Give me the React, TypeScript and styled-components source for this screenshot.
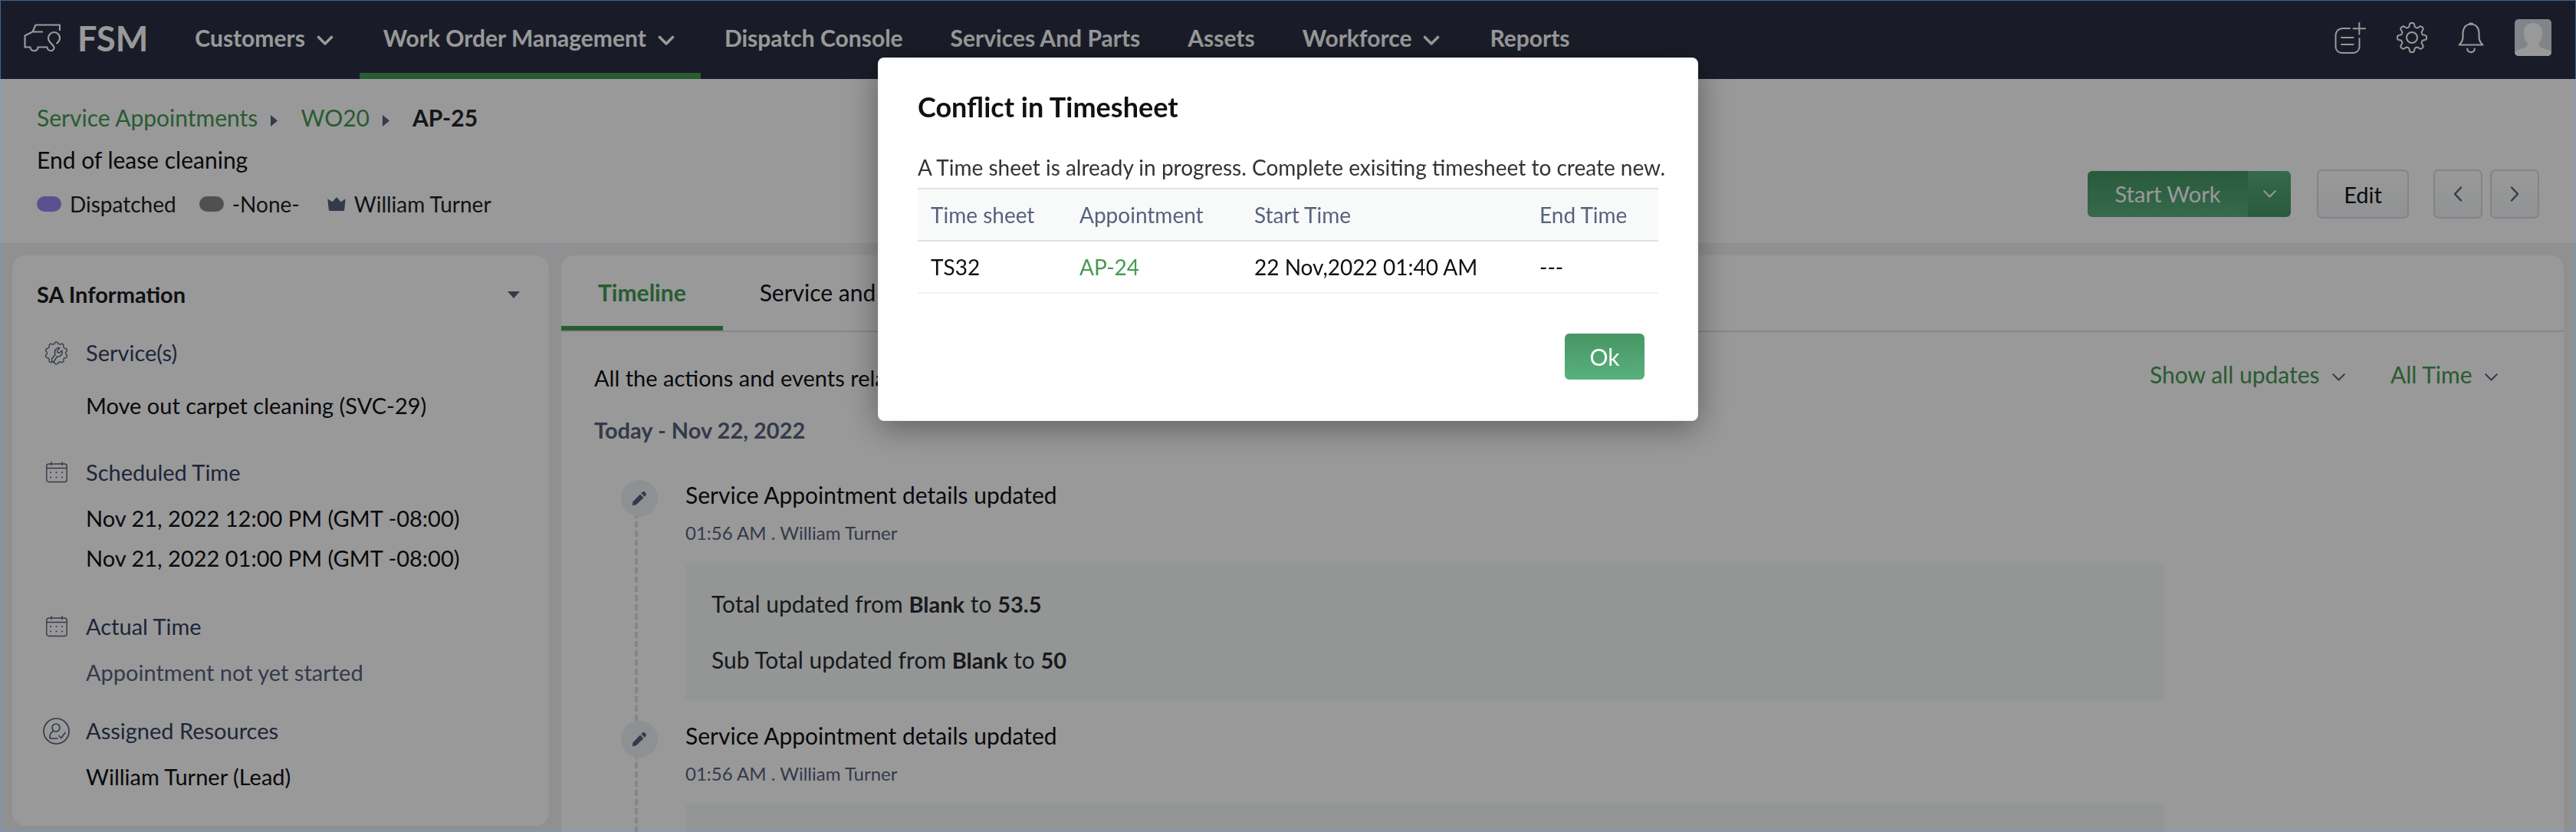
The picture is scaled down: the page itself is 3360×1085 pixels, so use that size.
import React from "react";
import styled, { createGlobalStyle, css } from "styled-components";

const color = {
  nav: "#2b3043",
  green: "#449952",
  ink: "#0f0f14",
  slate: "#57627d",
  navy: "#343f63",
  line: "#dbe3e8",
  canvas: "#f1f1f4",
};

const GlobalStyle = createGlobalStyle`
  *, *::before, *::after { box-sizing: border-box; }
  body { margin: 0; background: ${color.canvas}; }
  body, button, select, table { font-family: Lato, "Liberation Sans", sans-serif; }
  h1, h2, h3, p, ul, ol, dl, dd { margin: 0; padding: 0; font-weight: 400; }
  ul, ol { list-style: none; }
  button, select { border: 0; padding: 0; margin: 0; background: none; color: inherit; cursor: pointer; }
  a { color: inherit; text-decoration: none; }
  svg { display: block; flex: none; }
`;

/* ---------- icons ---------- */

const lobes = (count: number, center: number, radius: number, depth: number) => {
  const points: string[] = [];
  for (let i = 0; i < 240; i++) {
    const angle = (i / 240) * Math.PI * 2;
    const wave = Math.tanh(2 * Math.cos(count * angle));
    const r = radius + depth * wave;
    points.push(`${(center + r * Math.sin(angle)).toFixed(2)} ${(center - r * Math.cos(angle)).toFixed(2)}`);
  }
  return `M${points.join("L")}Z`;
};

const Stroke = styled.svg.attrs({ fill: "none", stroke: "currentColor", strokeLinecap: "round", strokeLinejoin: "round" })``;

const VanIcon = () => (
  <Stroke width="48" height="37" viewBox="0 0 48 37" strokeWidth="2.2">
    <path strokeLinecap="butt" d="M47 9V1.5H15.5L11.5 10.5L1.5 15.5V30.5H8.5C9 36.8 18 36.8 18.5 30.5H30.5C31 36.8 40 36.8 39.5 30.5C39 27 32 25 32 18.5A7.5 7.5 0 1 1 47 18.5C47 21.5 45 24 42.5 26M11.5 10.5H25" />
  </Stroke>
);

const NoteAddIcon = () => (
  <Stroke width="41" height="41" viewBox="0 0 41 41" strokeWidth="2">
    <path d="M20 8H10A9 9 0 0 0 1.5 17V32A8 8 0 0 0 9.5 40H24.5A8 8 0 0 0 32.5 32V21M9 20H24.5M9 29H24.5M24.5 8.3H40M32.3 .8V15.8" />
  </Stroke>
);

const GearIcon = () => (
  <Stroke width="40" height="40" viewBox="0 0 40 40" strokeWidth="2">
    <path d={lobes(8, 20, 16.6, 2.6)} />
    <circle cx="20" cy="20" r="7" />
  </Stroke>
);

const BellIcon = () => (
  <Stroke width="34" height="41" viewBox="0 0 34 41" strokeWidth="2.2">
    <path d="M17 2.5C10 2.5 6.5 8 6.5 14V19C6.5 24 4.5 27 1.5 29.5H32.5C29.5 27 27.5 24 27.5 19V14C27.5 8 24 2.5 17 2.5Z" />
    <path d="M15.5 2H18.5" strokeWidth="3" />
    <path d="M12.2 34.5A4.8 4.6 0 0 0 21.8 34.5" />
  </Stroke>
);

const ServiceIcon = () => (
  <Stroke width="31" height="31" viewBox="0 0 31 31" strokeWidth="1.4">
    <path d={lobes(10, 15.5, 13.3, 1.1)} />
    <path d="M9.5 26.5L9.5 23L14 17.5C12 12.5 15.5 7.5 20 8.5L16.8 12L17 14.5L19.5 15.2L22.8 12C24.5 16.5 20.5 21 16.5 20L11.5 27.5" />
  </Stroke>
);

const CalendarIcon = () => (
  <Stroke width="28" height="28" viewBox="0 0 28 28" strokeWidth="1.4">
    <rect x=".8" y="3" width="26.4" height="23.5" rx="3" />
    <path d="M1 8.5H27M7 .5V4.5M21 .5V4.5" />
    <path strokeWidth="2.2" d="M6 14h.01M13.5 14h.01M21 14h.01M6 20.5h.01M13.5 20.5h.01M21 20.5h.01" />
  </Stroke>
);

const ResourceIcon = () => (
  <Stroke width="35" height="35" viewBox="0 0 35 35" strokeWidth="1.7">
    <circle cx="17.5" cy="17.5" r="16.5" />
    <circle cx="17" cy="13" r="5" />
    <path d="M13.5 17.5C10.5 19 9 21 9 25C9 26.5 10 27 11 27H19M21 23.5L24 26.5L29 19.5" />
  </Stroke>
);

const CrownIcon = () => (
  <svg width="24" height="18" viewBox="0 0 24 18" fill={color.slate}>
    <path d="M.3 2.3L6.5 6.2L12 0L17.5 6.2L23.7 2.3L22.2 16.5Q22 18 20.5 18H3.5Q2 18 1.8 16.5Z" />
  </svg>
);

const PencilIcon = () => (
  <svg width="20" height="20" viewBox="0 0 20 20" fill={color.slate}>
    <path d="M.8 19.2L1.5 14.2L11 4.5L15.5 9L5.8 18.2Z" />
    <path d="M12.3 3.3L14 1.5Q15.8 .2 17.8 2.2Q19.8 4.2 18.5 6L16.7 7.7Z" />
  </svg>
);

const Chevron = ({ large = false }: { large?: boolean }) => (
  <Stroke width={large ? 22 : 19} height={large ? 14 : 12} viewBox="0 0 22 14" strokeWidth={large ? 3.6 : 2.4}>
    <path d="M2.5 2.5L11 11L19.5 2.5" />
  </Stroke>
);

const AngleIcon = ({ flip = false }: { flip?: boolean }) => (
  <Stroke width="12" height="20" viewBox="0 0 12 20" strokeWidth="2.4">
    <path d={flip ? "M2 1.5L10 10L2 18.5" : "M10 1.5L2 10L10 18.5"} />
  </Stroke>
);

const CaretDown = () => (
  <svg width="16" height="9" viewBox="0 0 16 9" fill={color.slate}>
    <path d="M0 0H16L8 9Z" />
  </svg>
);

const CaretRight = () => (
  <svg width="9" height="15" viewBox="0 0 9 15" fill={color.slate}>
    <path d="M0 0L9 7.5L0 15Z" />
  </svg>
);

const AvatarImage = () => (
  <svg width="48" height="48" viewBox="0 0 48 48">
    <rect width="48" height="48" fill="#d7dce3" />
    <path fill="#fff" d="M24 5C16 5 12 10 12 17C12 23 13.5 27 16.5 31C17 34.5 16 36 12 37.5C6 39.5 1.5 40 0 44V48H48V44C46.5 40 42 39.5 36 37.5C32 36 31 34.5 31.5 31C34.5 27 36 23 36 17C36 10 32 5 24 5Z" />
  </svg>
);

/* ---------- shell ---------- */

const Page = styled.div`
  display: flex;
  flex-direction: column;
  height: 100vh;
  overflow: hidden;
  color: ${color.ink};
`;

const TopBar = styled.header`
  display: flex;
  align-items: stretch;
  flex: none;
  height: 103px;
  padding: 0 32px 0 31px;
  background: ${color.nav};
  color: #fff;
`;

const Brand = styled.a`
  display: flex;
  align-items: center;
  gap: 22px;
  padding-right: 30px;
  padding-bottom: 4px;
  font-size: 45px;
  font-weight: 700;
`;

const Nav = styled.nav`
  display: flex;
  flex: 1;
`;

const navItem = css<{ $active?: boolean }>`
  display: flex;
  align-items: center;
  gap: 15px;
  padding: 0 31px 5px;
  font-size: 30px;
  font-weight: 700;
  white-space: nowrap;
  box-shadow: ${(p) => (p.$active ? `inset 0 -8px ${color.green}` : "none")};
`;

const NavLink = styled.a<{ $active?: boolean }>`
  ${navItem}
`;

const NavMenu = styled.button<{ $active?: boolean }>`
  ${navItem}
  padding-right: 34px;
  svg { margin-top: 8px; }
`;

const Tools = styled.div`
  display: flex;
  align-items: center;
  gap: 40px;
  padding-bottom: 5px;
`;

const ToolButton = styled.button`
  display: grid;
  place-items: center;
`;

const Avatar = styled(ToolButton)`
  border-radius: 5px;
  overflow: hidden;
`;

/* ---------- record header ---------- */

const RecordHeader = styled.section`
  display: flex;
  justify-content: space-between;
  align-items: flex-end;
  flex: none;
  padding: 30px 48px 32px;
  background: #fff;
`;

const RecordInfo = styled.div`
  display: grid;
  gap: 16px;
  line-height: 40px;
`;

const Crumbs = styled.ol`
  display: flex;
  font-size: 30px;
`;

const Crumb = styled.li`
  display: flex;
  align-items: center;
  color: ${color.green};
  svg { margin: 8px 30px 0 17px; }
  &[aria-current] { color: #24242e; font-weight: 700; }
`;

const Subject = styled.p`
  font-size: 30px;
  line-height: 38px;
`;

const StatusRow = styled.ul`
  display: flex;
  gap: 30px;
  padding-top: 4px;
  font-size: 28px;
  color: #1d1d24;
  line-height: 38px;
`;

const Status = styled.li<{ $indent?: boolean }>`
  display: flex;
  align-items: center;
  gap: 11px;
  padding-left: ${(p) => (p.$indent ? "6px" : "0")};
`;

const Pill = styled.span<{ $tone: string }>`
  width: 32px;
  height: 20px;
  border-radius: 10px;
  background: ${(p) => p.$tone};
`;

const Actions = styled.div`
  display: flex;
  align-items: center;
`;

const primaryFill = "linear-gradient(#479664, #58b17d)";

const SplitButton = styled.div`
  display: flex;
  height: 60px;
  margin-right: 34px;
  border-radius: 6px;
  overflow: hidden;
  color: #fff;
`;

const StartButton = styled.button`
  width: 209px;
  padding-bottom: 2px;
  font-size: 29px;
  background: ${primaryFill};
`;

const StartMenu = styled.button`
  display: grid;
  place-items: center;
  width: 56px;
  background: linear-gradient(#58b17d, #479664);
`;

const OutlineButton = styled.button<{ $square?: boolean }>`
  display: grid;
  place-items: center;
  width: ${(p) => (p.$square ? "64px" : "120px")};
  height: 64px;
  border: 2px solid #d5dde1;
  border-radius: 7px;
  background: linear-gradient(#fff, #f2f4f7);
  color: ${(p) => (p.$square ? color.slate : color.ink)};
  font-size: 29px;
`;

const Pager = styled.div`
  display: flex;
  gap: 10px;
  margin-left: 32px;
`;

/* ---------- panels ---------- */

const Content = styled.main`
  display: grid;
  grid-template-columns: 700px minmax(0, 1fr);
  align-items: start;
  gap: 16px;
  padding: 16px;
  background: ${color.canvas};
`;

const Panel = styled.section`
  border-radius: 18px;
  background: #fff;
  overflow: hidden;
`;

const InfoPanel = styled(Panel)`
  display: grid;
  gap: 36px;
  padding: 31px 38px 44px 32px;
  line-height: 40px;
`;

const InfoTitle = styled.h2`
  display: flex;
  align-items: center;
  justify-content: space-between;
  font-size: 29px;
  font-weight: 700;
  color: #1b1b22;
`;

const InfoGroup = styled.div`
  display: grid;
  grid-template-columns: 64px 1fr;
  row-gap: 20px;
`;

const InfoIcon = styled.span`
  display: grid;
  place-items: center;
  width: 35px;
  height: 40px;
  margin-left: 8px;
  color: ${color.slate};
`;

const InfoLabel = styled.h3`
  font-size: 29px;
  color: ${color.navy};
`;

const InfoValues = styled.div<{ $kind?: "service" | "time" | "empty" }>`
  grid-column: 2;
  display: grid;
  gap: 12px;
  padding: ${(p) => (p.$kind === "service" ? "9px 0 11px" : p.$kind === "time" ? "0 0 13px" : "0")};
  font-size: 29px;
  color: ${(p) => (p.$kind === "empty" ? color.slate : color.ink)};
`;

const Tabs = styled.div`
  display: flex;
  border-bottom: 2px solid ${color.line};
`;

const Tab = styled.button<{ $active?: boolean }>`
  height: 98px;
  padding: 0 48px 2px;
  font-size: 30px;
  font-weight: ${(p) => (p.$active ? 700 : 400)};
  color: ${(p) => (p.$active ? color.green : color.ink)};
  box-shadow: ${(p) => (p.$active ? `inset 0 -6px ${color.green}` : "none")};
`;

const TimelineBody = styled.div`
  padding: 40px 40px 40px 43px;
`;

const IntroRow = styled.div`
  display: flex;
  justify-content: space-between;
  align-items: flex-start;
`;

const Intro = styled.p`
  font-size: 29px;
  line-height: 40px;
`;

const Filters = styled.div`
  display: flex;
  gap: 58px;
  margin-right: 45px;
`;

const Filter = styled.label`
  display: flex;
  align-items: center;
  gap: 14px;
  height: 30px;
  color: ${color.slate};
  svg { margin-top: 8px; }
`;

const FilterSelect = styled.select`
  appearance: none;
  font-size: 30px;
  line-height: 36px;
  color: ${color.green};
`;

const DayHeading = styled.h3`
  margin: 28px 0 45px;
  font-size: 29px;
  font-weight: 700;
  line-height: 40px;
  color: ${color.slate};
`;

const Events = styled.ol`
  margin-left: 35px;
`;

const Event = styled.li`
  display: grid;
  grid-template-columns: 48px minmax(0, 1fr);
  column-gap: 36px;
`;

const Rail = styled.div`
  display: flex;
  flex-direction: column;
`;

const Marker = styled.span`
  display: grid;
  place-items: center;
  width: 48px;
  height: 48px;
  border-radius: 50%;
  background: #eef0f4;
`;

const Dashes = styled.span`
  flex: 1;
  width: 4px;
  margin-left: 18px;
  background: repeating-linear-gradient(#d8e1e5 0 2px, transparent 2px 6px, #d8e1e5 6px 12px);
`;

const EventBody = styled.div`
  padding-bottom: 27px;
`;

const EventTitle = styled.h4`
  margin: 0;
  font-size: 30px;
  font-weight: 400;
  line-height: 38px;
`;

const EventMeta = styled.p`
  margin: 16px 0 24px;
  font-size: 24px;
  line-height: 30px;
  color: ${color.slate};
`;

const Changes = styled.ul`
  display: grid;
  gap: 33px;
  width: 80%;
  padding: 33px 34px;
  background: #f7fbf9;
  font-size: 30px;
  line-height: 40px;
  color: #2a2b33;
  b { font-size: 29px; line-height: 1; }
`;

/* ---------- dialog ---------- */

const Overlay = styled.div`
  position: fixed;
  inset: 0;
  display: flex;
  justify-content: center;
  align-items: flex-start;
  padding-top: 74px;
  border: 1px solid rgba(104, 157, 231, 0.54);
  background: rgba(0, 0, 0, 0.4);
`;

const Dialog = styled.div`
  width: 1070px;
  padding: 38px 50px 52px;
  border: 2px solid #f6f6f6;
  border-radius: 8px;
  background: #fff;
  box-shadow: 0 8px 44px rgba(0, 0, 0, 0.4);
`;

const DialogTitle = styled.h2`
  font-size: 36px;
  font-weight: 700;
  line-height: 48px;
  color: #111;
`;

const DialogText = styled.p`
  margin: 35px 0 7px;
  font-size: 28px;
  line-height: 40px;
  white-space: nowrap;
  color: #333;
`;

const SheetTable = styled.table`
  width: 100%;
  table-layout: fixed;
  border-collapse: separate;
  border-spacing: 0;
  text-align: left;
  font-size: 28px;
`;

const Col = styled.col<{ $width?: number }>`
  width: ${(p) => (p.$width ? `${p.$width}px` : "auto")};
`;

const HeadCell = styled.th`
  height: 70px;
  padding: 0 0 0 17px;
  border: solid ${color.line};
  border-width: 2px 0;
  background: #f8fafa;
  color: ${color.slate};
  font-weight: 400;
`;

const Cell = styled.td`
  height: 68px;
  padding: 0 0 0 17px;
  border-bottom: 2px solid #f0f4f8;
  color: ${color.ink};
`;

const GreenLink = styled.a`
  color: ${color.green};
`;

const DialogActions = styled.div`
  display: flex;
  justify-content: flex-end;
  margin: 52px 18px 0 0;
`;

const OkButton = styled.button`
  width: 104px;
  height: 60px;
  border-radius: 6px;
  background: ${primaryFill};
  color: #fff;
  font-size: 30px;
`;

/* ---------- data ---------- */

const navigation = [
  { label: "Customers", menu: true },
  { label: "Work Order Management", menu: true, active: true },
  { label: "Dispatch Console" },
  { label: "Services And Parts" },
  { label: "Assets" },
  { label: "Workforce", menu: true },
  { label: "Reports" },
];

type Change = { field: string; from: string; to: string };

const events: { id: number; title: string; meta: string; changes: Change[] }[] = [
  {
    id: 1,
    title: "Service Appointment details updated",
    meta: "01:56 AM . William Turner",
    changes: [
      { field: "Total", from: "Blank", to: "53.5" },
      { field: "Sub Total", from: "Blank", to: "50" },
    ],
  },
  {
    id: 2,
    title: "Service Appointment details updated",
    meta: "01:56 AM . William Turner",
    changes: [],
  },
];

export default function App() {
  return (
    <>
      <GlobalStyle />
      <Page>
        <TopBar>
          <Brand href="#"><VanIcon />FSM</Brand>
          <Nav aria-label="Main">
            {navigation.map((item) =>
              item.menu ? (
                <NavMenu key={item.label} type="button" $active={item.active}>
                  {item.label}<Chevron large />
                </NavMenu>
              ) : (
                <NavLink key={item.label} href="#">{item.label}</NavLink>
              )
            )}
          </Nav>
          <Tools>
            <ToolButton type="button" aria-label="Create"><NoteAddIcon /></ToolButton>
            <ToolButton type="button" aria-label="Settings"><GearIcon /></ToolButton>
            <ToolButton type="button" aria-label="Notifications"><BellIcon /></ToolButton>
            <Avatar type="button" aria-label="Profile"><AvatarImage /></Avatar>
          </Tools>
        </TopBar>

        <RecordHeader>
          <RecordInfo>
            <Crumbs>
              <Crumb><a href="#">Service Appointments</a><CaretRight /></Crumb>
              <Crumb><a href="#">WO20</a><CaretRight /></Crumb>
              <Crumb aria-current="page">AP-25</Crumb>
            </Crumbs>
            <Subject>End of lease cleaning</Subject>
            <StatusRow>
              <Status><Pill $tone="#9985f0" />Dispatched</Status>
              <Status><Pill $tone="#858585" />-None-</Status>
              <Status $indent><CrownIcon />William Turner</Status>
            </StatusRow>
          </RecordInfo>
          <Actions>
            <SplitButton>
              <StartButton type="button">Start Work</StartButton>
              <StartMenu type="button" aria-label="More start options"><Chevron /></StartMenu>
            </SplitButton>
            <OutlineButton type="button">Edit</OutlineButton>
            <Pager>
              <OutlineButton type="button" $square aria-label="Previous"><AngleIcon /></OutlineButton>
              <OutlineButton type="button" $square aria-label="Next"><AngleIcon flip /></OutlineButton>
            </Pager>
          </Actions>
        </RecordHeader>

        <Content>
          <InfoPanel>
            <InfoTitle>SA Information<CaretDown /></InfoTitle>
            <InfoGroup>
              <InfoIcon><ServiceIcon /></InfoIcon>
              <InfoLabel>Service(s)</InfoLabel>
              <InfoValues $kind="service"><span>Move out carpet cleaning (SVC-29)</span></InfoValues>
            </InfoGroup>
            <InfoGroup>
              <InfoIcon><CalendarIcon /></InfoIcon>
              <InfoLabel>Scheduled Time</InfoLabel>
              <InfoValues $kind="time">
                <span>Nov 21, 2022 12:00 PM (GMT -08:00)</span>
                <span>Nov 21, 2022 01:00 PM (GMT -08:00)</span>
              </InfoValues>
            </InfoGroup>
            <InfoGroup>
              <InfoIcon><CalendarIcon /></InfoIcon>
              <InfoLabel>Actual Time</InfoLabel>
              <InfoValues $kind="empty">Appointment not yet started</InfoValues>
            </InfoGroup>
            <InfoGroup>
              <InfoIcon><ResourceIcon /></InfoIcon>
              <InfoLabel>Assigned Resources</InfoLabel>
              <InfoValues>William Turner (Lead)</InfoValues>
            </InfoGroup>
          </InfoPanel>

          <Panel>
            <Tabs role="tablist">
              <Tab type="button" role="tab" aria-selected $active>Timeline</Tab>
              <Tab type="button" role="tab">Service and Parts</Tab>
            </Tabs>
            <TimelineBody>
              <IntroRow>
                <Intro>All the actions and events related to the appointment</Intro>
                <Filters>
                  <Filter>
                    <FilterSelect aria-label="Update type"><option>Show all updates</option></FilterSelect>
                    <Chevron />
                  </Filter>
                  <Filter>
                    <FilterSelect aria-label="Period"><option>All Time</option></FilterSelect>
                    <Chevron />
                  </Filter>
                </Filters>
              </IntroRow>
              <DayHeading>Today - Nov 22, 2022</DayHeading>
              <Events>
                {events.map((event) => (
                  <Event key={event.id}>
                    <Rail><Marker><PencilIcon /></Marker><Dashes /></Rail>
                    <EventBody>
                      <EventTitle>{event.title}</EventTitle>
                      <EventMeta>{event.meta}</EventMeta>
                      <Changes>
                        {event.changes.map((change) => (
                          <li key={change.field}>
                            {change.field} updated from <b>{change.from}</b> to <b>{change.to}</b>
                          </li>
                        ))}
                      </Changes>
                    </EventBody>
                  </Event>
                ))}
              </Events>
            </TimelineBody>
          </Panel>
        </Content>
      </Page>

      <Overlay>
        <Dialog role="dialog" aria-modal="true" aria-labelledby="conflict-title">
          <DialogTitle id="conflict-title">Conflict in Timesheet</DialogTitle>
          <DialogText>A Time sheet is already in progress. Complete exisiting timesheet to create new.</DialogText>
          <SheetTable>
            <colgroup>
              <Col $width={194} /><Col $width={228} /><Col $width={372} /><Col />
            </colgroup>
            <thead>
              <tr>
                <HeadCell>Time sheet</HeadCell>
                <HeadCell>Appointment</HeadCell>
                <HeadCell>Start Time</HeadCell>
                <HeadCell>End Time</HeadCell>
              </tr>
            </thead>
            <tbody>
              <tr>
                <Cell>TS32</Cell>
                <Cell><GreenLink href="#">AP-24</GreenLink></Cell>
                <Cell>22 Nov,2022 01:40 AM</Cell>
                <Cell>---</Cell>
              </tr>
            </tbody>
          </SheetTable>
          <DialogActions><OkButton type="button">Ok</OkButton></DialogActions>
        </Dialog>
      </Overlay>
    </>
  );
}
